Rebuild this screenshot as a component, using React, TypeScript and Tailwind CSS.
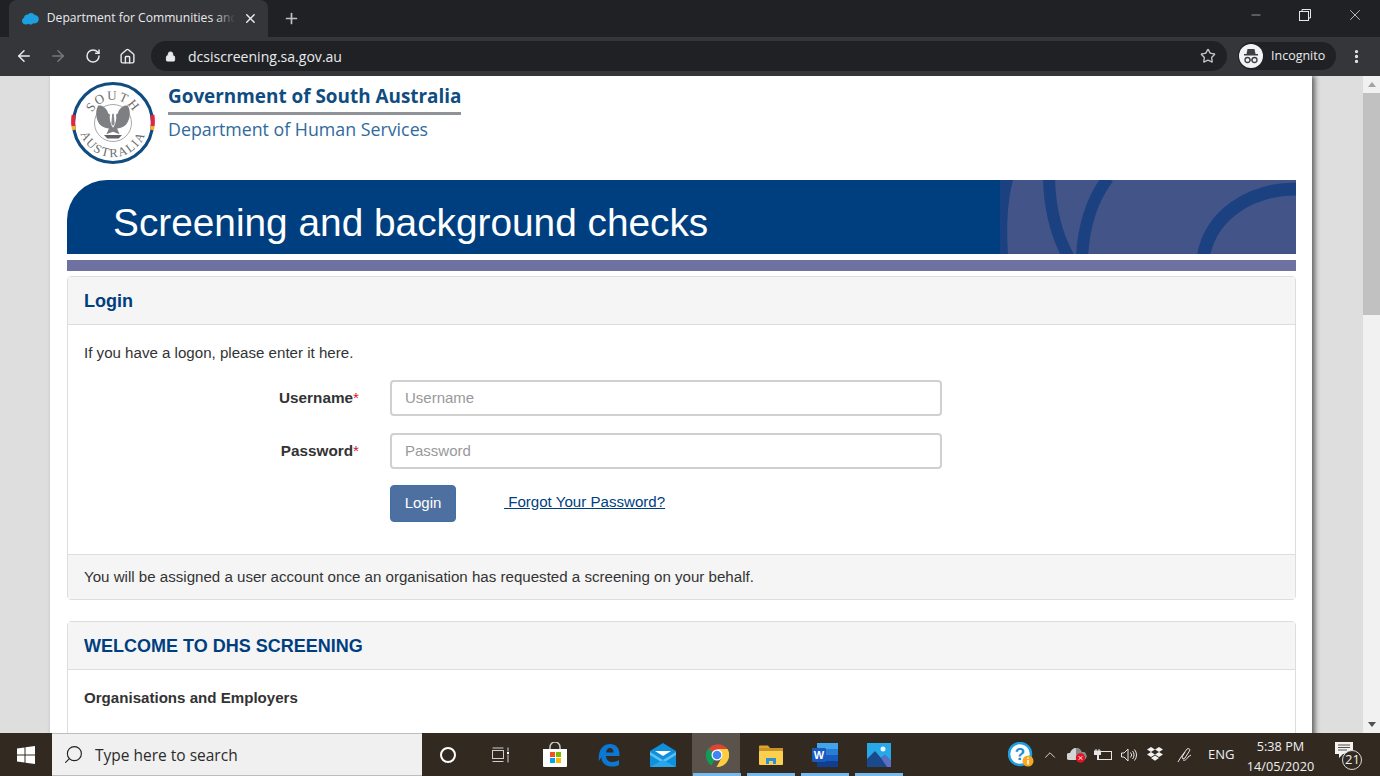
import { ArrowLeft, ArrowRight, RotateCw, Home, Lock, Star, X, Plus, Minus, MoreVertical, Search, ChevronUp } from 'lucide-react'

function SalesforceIcon() {
  return (
    <svg width="17" height="12" viewBox="0 0 17 12">
      <path d="M4 11.500C1.800 11.500 0 10 0 8c0-1.400.8-2.600 2-3.200C2.400 2.600 4 1.400 5.800 1.600 6.700.6 8 0 9.300 0c1.500 0 2.800.7 3.400 1.900C15.200 2 17 3.700 17 6c0 2.500-2 4.500-4.500 4.500-.5 0-.8 0-1.200-.1-.6.800-1.500 1.300-2.500 1.300-.8 0-1.600-.3-2.100-.8-.7.400-1.700.6-2.700.6z" fill="#1ca0e0" />
    </svg>
  )
}

function IncognitoAvatar() {
  return (
    <svg width="24" height="24" viewBox="0 0 24 24">
      <circle cx="12" cy="12" r="12" fill="#f1f3f4" />
      <path d="M8.500 5h7l1 5h-9z" fill="#3c4043" />
      <rect x="5" y="10" width="14" height="1.500" fill="#3c4043" />
      <circle cx="8.500" cy="16" r="2.500" fill="none" stroke="#3c4043" strokeWidth="1.300" />
      <circle cx="15.500" cy="16" r="2.500" fill="none" stroke="#3c4043" strokeWidth="1.300" />
      <path d="M11 16h2" stroke="#3c4043" strokeWidth="1.200" />
    </svg>
  )
}

function SaLogo() {
  return (
    <svg width="84" height="84" viewBox="0 0 84 84">
      <defs>
        <path id="topArc" d="M19 42a23 23 0 0 1 46 0" />
        <path id="bottomArc" d="M8 42a34 34 0 0 0 68 0" />
      </defs>
      <circle cx="42" cy="42" r="39.500" fill="#fff" stroke="#0f4c81" strokeWidth="3.200" />
      <path d="M2.600 34a40 40 0 0 0 -.2 11" fill="none" stroke="#e2243c" strokeWidth="4" />
      <path d="M81.400 34a40 40 0 0 1 .2 11" fill="none" stroke="#e2243c" strokeWidth="4" />
      <path d="M2.400 45a40 40 0 0 0 .6 4" fill="none" stroke="#f3b133" strokeWidth="4" />
      <path d="M81.600 45a40 40 0 0 1 -.6 4" fill="none" stroke="#f3b133" strokeWidth="4" />
      <circle cx="42" cy="42" r="18.500" fill="#fff" stroke="#a9a9a9" strokeWidth="1" />
      <text fontFamily="'Liberation Serif', serif" fontSize="13" fill="#6e6e6e" letterSpacing="1.500">
        <textPath href="#topArc" startOffset="50%" textAnchor="middle">SOUTH</textPath>
      </text>
      <text fontFamily="'Liberation Serif', serif" fontSize="12.500" fill="#6e6e6e" letterSpacing="1.600">
        <textPath href="#bottomArc" startOffset="50%" textAnchor="middle">AUSTRALIA</textPath>
      </text>
      <g transform="translate(42 41) scale(.82) translate(-42 -44)">
        <path d="M36 33c-2-7-8-10-12-9-5 8-2 21 4 25 3 2 6 3 9 3l-3 7 8-3 8 3-3-7c3 0 6-1 9-3 6-4 9-17 4-25-4-1-10 2-12 9-1 2-3 2-6 2s-5 0-6-2z" fill="#7d7f82" />
        <path d="M39 33c-2 5-1 12 3 18 4-6 5-13 3-18-2-2-4-2-6 0z" fill="#fff" />
        <path d="M41 34h2l1 12-2 3-2-3z" fill="#8a8c8f" />
        <path d="M31 60h22l-4 4H35z" fill="#5f6164" />
      </g>
    </svg>
  )
}

function BannerArt() {
  return (
    <svg className="absolute right-0 top-0" width="296" height="74" viewBox="0 0 296 74">
      <rect width="296" height="74" fill="#425488" />
      <path d="M0 0H13Q5 30 8 74H0Z" fill="#1b4180" />
      <path d="M49 -2Q50 44 69 78" fill="none" stroke="#1b4180" strokeWidth="12" />
      <path d="M108 -2Q84 30 82 78" fill="none" stroke="#1b4180" strokeWidth="12" />
      <path d="M203 78C210 35 250 9 296 9" fill="none" stroke="#1b4180" strokeWidth="13" />
    </svg>
  )
}

function StoreIcon() {
  return (
    <svg width="26" height="26" viewBox="0 0 26 26">
      <path d="M8 8V5a5 5 0 0 1 10 0v3" fill="none" stroke="#c9c9c9" strokeWidth="1.500" />
      <path d="M1 7h24v17a1 1 0 0 1-1 1H2a1 1 0 0 1-1-1z" fill="#fff" />
      <rect x="8" y="10" width="5" height="5" fill="#f25022" />
      <rect x="14" y="10" width="5" height="5" fill="#7fba00" />
      <rect x="8" y="16" width="5" height="5" fill="#00a4ef" />
      <rect x="14" y="16" width="5" height="5" fill="#ffb900" />
    </svg>
  )
}

function EdgeIcon() {
  return (
    <svg width="22" height="24" viewBox="0 0 22 24">
      <path d="M1 12C2 5 6 1 12 1c6 0 10 4 9.500 12H8c.2 4 3 6 6.500 6 2.500 0 5-.8 6.500-2v5c-2 1-4.500 1.500-7 1.500C7 23.500 3 19 3.500 14 3 15 2 16 1 18c-.3-2-.3-4 0-6zm7-2.500h7.500C15.500 6.500 14 5 11.800 5 10 5 8.500 7 8 9.500z" fill="#0a78d4" fillRule="evenodd" />
    </svg>
  )
}

function MailIcon() {
  return (
    <svg width="28" height="24" viewBox="0 0 28 24">
      <path d="M14 0L27 8v15a1 1 0 0 1-1 1H2a1 1 0 0 1-1-1V8z" fill="#0f8fdc" />
      <path d="M6 8h16l-8 5z" fill="#fff" />
      <path d="M1 9l13 8 13-8v3L14 20 1 12z" fill="#5ec1f3" />
      <path d="M14 17l13 7H1z" fill="#28a8ea" />
    </svg>
  )
}

function ChromeIcon() {
  return (
    <svg width="24" height="24" viewBox="0 0 24 24">
      <path d="M12 12L3 6.500A12 12 0 0 1 22.500 6H12z" fill="#db4437" />
      <path d="M12 12l-5.500 10.500A12 12 0 0 1 3 5.500z" fill="#0f9d58" />
      <path d="M12 6h10.500A12 12 0 0 1 11.500 24l5-9z" fill="#ffcd40" />
      <circle cx="12" cy="12" r="5.500" fill="#fff" />
      <circle cx="12" cy="12" r="4.300" fill="#4285f4" />
    </svg>
  )
}

function FolderIcon() {
  return (
    <svg width="24" height="20" viewBox="0 0 24 20">
      <path d="M0 1.500A1 1 0 0 1 1 .5h8l2 2.500H0z" fill="#e0a52c" />
      <rect y="3" width="24" height="4" fill="#c9922a" />
      <rect y="6" width="24" height="14" rx="1" fill="#fbd04f" />
      <path d="M7 19v-6h10v6h-3v-3h-4v3z" fill="#2f8fd6" />
    </svg>
  )
}

function WordIcon() {
  return (
    <svg width="26" height="24" viewBox="0 0 26 24">
      <rect x="5" width="21" height="6" fill="#41a5ee" />
      <rect x="5" y="6" width="21" height="6" fill="#2b7cd3" />
      <rect x="5" y="12" width="21" height="6" fill="#185abd" />
      <rect x="5" y="18" width="21" height="6" fill="#103f91" />
      <rect y="5" width="14" height="14" rx="1" fill="#185abd" />
      <text x="7" y="16" textAnchor="middle" fontFamily="'Liberation Sans', sans-serif" fontSize="11" fontWeight="700" fill="#fff">W</text>
    </svg>
  )
}

function PhotosIcon() {
  return (
    <svg width="24" height="24" viewBox="0 0 24 24">
      <rect width="24" height="24" fill="#27a9e8" />
      <circle cx="16" cy="6" r="2.500" fill="#e8f5fc" />
      <path d="M0 16l8-8 6 7 4-3 6 6v6H0z" fill="#1a4a8c" />
      <path d="M14 15l4-3 6 6v6h-4z" fill="#5b6fc4" />
    </svg>
  )
}

function HelpIcon() {
  return (
    <svg width="26" height="26" viewBox="0 0 26 26">
      <circle cx="12" cy="12" r="11" fill="#fff" stroke="#1ba1e2" strokeWidth="2.500" />
      <text x="12" y="18" textAnchor="middle" fontFamily="'Liberation Sans', sans-serif" fontSize="17" fontWeight="700" fill="#1b8fd6">?</text>
      <circle cx="20" cy="19" r="5.500" fill="#f6a821" />
      <rect x="19.300" y="18" width="1.500" height="4.500" fill="#fff" />
      <rect x="19.300" y="15.500" width="1.500" height="1.500" fill="#fff" />
    </svg>
  )
}

function CloudErrorIcon() {
  return (
    <svg width="20" height="16" viewBox="0 0 20 16">
      <path d="M2 13a3.500 3.500 0 0 1 1-7c1-3 3-5 6-5s5 2 5.500 4A4 4 0 0 1 16 13z" fill="#d5d5d5" />
      <path d="M9 1c3 0 5 2 5.500 4A4 4 0 0 1 16 13H9z" fill="#888" />
      <circle cx="13.500" cy="11" r="4.700" fill="#e81123" />
      <path d="M11.700 9.200l3.600 3.600M15.300 9.200l-3.600 3.600" stroke="#fff" strokeWidth="1" />
    </svg>
  )
}

function BatteryIcon() {
  return (
    <svg width="18" height="14" viewBox="0 0 18 14" fill="none" stroke="#e6e6e6">
      <rect x="4.500" y="3.500" width="13" height="8" />
      <path d="M2 1v2M5 1v2" />
      <rect x=".5" y="3" width="6" height="3.500" fill="#e6e6e6" />
      <path d="M3.500 7v5" />
    </svg>
  )
}

function SpeakerIcon() {
  return (
    <svg width="17" height="14" viewBox="0 0 17 14" fill="none" stroke="#e6e6e6">
      <path d="M.5 5h2.500L7 1v12L3 9H.5z" />
      <path d="M9.500 4.500a3.500 3.500 0 0 1 0 5M11.500 3a6 6 0 0 1 0 8M13.500 1.500a8.500 8.500 0 0 1 0 11" />
    </svg>
  )
}

function DropboxIcon() {
  return (
    <svg width="16" height="15" viewBox="0 0 16 15" fill="#f2f2f2">
      <path d="M4 0l4 2.500L4 5 0 2.500zM12 0l4 2.500L12 5 8 2.500zM4 5l4 2.500L4 10 0 7.500zM12 5l4 2.500L12 10 8 7.500zM4 11l4-2.500 4 2.500-4 2.800z" />
    </svg>
  )
}

function PenIcon() {
  return (
    <svg width="16" height="16" viewBox="0 0 16 16" fill="none" stroke="#e6e6e6">
      <path d="M1 15l3-5 6-8c1-1 3 0 3 1l-5 8-2 1-1-2 3-5M6 13c2 1 4-1 5-3l3-2" />
    </svg>
  )
}

function NotificationIcon() {
  return (
    <svg width="20" height="18" viewBox="0 0 20 18">
      <path d="M0 0h18v12H8l-4 4v-4H0z" fill="#f2f2f2" />
      <path d="M3 3h12M3 5.500h12M3 8h9" stroke="#554f46" strokeWidth="1" />
    </svg>
  )
}

function TaskViewIcon() {
  return (
    <svg width="18" height="16" viewBox="0 0 18 16" fill="none" stroke="#cfcfcf">
      <rect x=".5" y="3.500" width="11" height="8" />
      <path d="M.5 1h11M.5 14.500h11M16 .5v4M16 7.500v8" />
      <rect x="15" y="5" width="2" height="2" fill="#fff" stroke="none" />
    </svg>
  )
}

function TaskbarApp({ children, active, running }: { children: React.ReactNode; active?: boolean; running?: boolean }) {
  return (
    <div className="relative flex h-full w-[54px] shrink-0 items-center justify-center">
      {active && <div className="absolute inset-y-0 left-[2px] right-[4px] bg-[#5a534c]" />}
      <div className="relative flex">{children}</div>
      {running && <div className="absolute bottom-0 left-[3px] right-[3px] h-[3px] bg-[#76b9ed]" />}
    </div>
  )
}

function Field({ label, placeholder }: { label: string; placeholder: string }) {
  return (
    <div className="flex h-9 items-center">
      <label className="w-[276px] pr-[1px] text-right text-[15.300px] font-bold text-[#333]">
        {label}<span className="font-normal text-[#e0102a]">*</span>
      </label>
      <input
        placeholder={placeholder}
        className="ml-[30px] h-9 w-[552px] rounded border-2 border-[#d0d0d0] bg-white px-[13px] pb-[2px] text-[15px] text-[#333] placeholder:text-[#999]"
      />
    </div>
  )
}

export default function App() {
  return (
    <div className="flex h-[776px] w-[1380px] flex-col overflow-hidden bg-[#dedede] font-['Liberation_Sans',sans-serif]">
      {/* tab strip */}
      <div className="flex h-[37px] shrink-0 items-end bg-[#202124] pl-[9px] font-['Open_Sans',sans-serif]">
        <div className="flex h-[37px] w-[259px] items-center rounded-t-lg bg-[#35363a] pl-[13px] pr-[10px]">
          <SalesforceIcon />
          <div className="relative ml-[8px] w-[190px] overflow-hidden whitespace-nowrap text-[12.100px] text-[#e8eaed]">
            Department for Communities and
            <div className="absolute right-0 top-0 h-full w-5 bg-gradient-to-r from-transparent to-[#35363a]" />
          </div>
          <X size={15} strokeWidth={2.4} className="ml-[8px] text-[#e8eaed]" />
        </div>
        <Plus size={17} strokeWidth={2.4} className="mb-[10px] ml-[15px] text-[#bdc1c6]" />
        <div className="mb-[13px] ml-auto flex items-center pr-[16px] text-[#e8e8e8]">
          <Minus size={14} strokeWidth={1} />
          <svg className="ml-[36px]" width="12" height="12" viewBox="0 0 12 12" fill="none" stroke="#e8e8e8">
            <rect x=".5" y="2.500" width="9" height="9" />
            <path d="M3 2.500V.5h8.500V9H9.500" />
          </svg>
          <X size={18} strokeWidth={1} className="ml-[35px]" />
        </div>
      </div>

      {/* toolbar */}
      <div className="flex h-[39px] shrink-0 items-center bg-[#35363a] pb-[1px] font-['Open_Sans',sans-serif]">
        <ArrowLeft size={18} className="ml-[15px] text-[#e8eaed]" />
        <ArrowRight size={18} className="ml-[16px] text-[#75787c]" />
        <RotateCw size={16} strokeWidth={2.2} className="ml-[18px] text-[#e8eaed]" />
        <Home size={17} strokeWidth={2} className="ml-[18px] text-[#e8eaed]" />
        <div className="ml-[15px] flex h-[30px] w-[1076px] items-center rounded-full bg-[#202124] pl-[14px] pr-[11px]">
          <Lock size={11} fill="#e8eaed" className="text-[#e8eaed]" />
          <span className="ml-[12px] pt-[1px] text-[14.050px] text-[#e8eaed]">dcsiscreening.sa.gov.au</span>
          <Star size={16} className="ml-auto text-[#c4c7ca]" />
        </div>
        <div className="ml-[11px] flex h-[28px] w-[98px] items-center rounded-full bg-[#202124] pl-[1px]">
          <IncognitoAvatar />
          <span className="ml-[8px] text-[12.500px] text-[#e8eaed]">Incognito</span>
        </div>
        <MoreVertical size={17} strokeWidth={2.6} className="ml-[12px] text-[#e8eaed]" />
      </div>

      {/* browser viewport */}
      <div className="flex min-h-0 flex-1">
        <div className="flex flex-1 overflow-hidden pl-[50px]">
          <div className="h-[700px] w-[1262px] shrink-0 bg-white pl-[17px] pr-[16px] shadow-[3px_0_5px_rgba(0,0,0,0.55)]">
            <div className="flex h-[104px] items-start pl-[4px] pt-[5px]">
              <SaLogo />
              <div className="ml-[13px] w-[293px] pt-[2px] font-['Open_Sans',sans-serif]">
                <div className="whitespace-nowrap text-[18.900px] font-bold leading-[27px] text-[#0f4c81]">Government of South Australia</div>
                <div className="mt-[2px] h-[3px] bg-[#8f9296]" />
                <div className="whitespace-nowrap text-[17.800px] leading-[28px] text-[#2f6a9c]">Department of Human Services</div>
              </div>
            </div>

            <div className="relative h-[74px] overflow-hidden rounded-tl-[40px] bg-[#003f7f] pl-[46px]">
              <BannerArt />
              <h1 className="relative text-[38.800px] leading-[85px] text-white">Screening and background checks</h1>
            </div>
            <div className="mt-[6px] h-[11px] bg-[#6f72a0]" />

            <section className="mt-[5px] flex h-[324px] flex-col rounded border border-[#ddd]">
              <div className="flex h-[48px] shrink-0 items-center border-b border-[#ddd] bg-[#f5f5f5] px-4 pt-[1px]">
                <h2 className="text-[18px] font-bold text-[#003f7f]">Login</h2>
              </div>
              <div className="flex-1 px-4 pt-[19px]">
                <p className="text-[15.100px] leading-[17px] text-[#333]">If you have a logon, please enter it here.</p>
                <div className="mt-[19px] flex flex-col gap-[17px]">
                  <Field label="Username" placeholder="Username" />
                  <Field label="Password" placeholder="Password" />
                </div>
                <div className="mt-[16px] flex items-center pl-[306px]">
                  <button className="h-[37px] w-[66px] rounded border border-[#3d72a8] bg-[#4e70a1] text-[15px] text-white">Login</button>
                  <a className="mb-[3px] ml-[48px] whitespace-pre text-[15.100px] text-[#003f7f] underline"> Forgot Your Password?</a>
                </div>
              </div>
              <div className="flex h-[45px] shrink-0 items-center border-t border-[#ddd] bg-[#f5f5f5] px-4 pt-[1px] text-[15.100px] text-[#333]">
                You will be assigned a user account once an organisation has requested a screening on your behalf.
              </div>
            </section>

            <section className="mt-[21px] h-[200px] rounded-t border border-[#ddd]">
              <div className="flex h-[48px] items-center border-b border-[#ddd] bg-[#f5f5f5] px-4 pt-[1px]">
                <h2 className="text-[18px] font-bold text-[#003f7f]">WELCOME TO DHS SCREENING</h2>
              </div>
              <div className="px-4 pt-[17px] text-[15.100px] font-bold text-[#333]">Organisations and Employers</div>
            </section>
          </div>
        </div>

        {/* scrollbar */}
        <div className="flex w-[17px] shrink-0 flex-col bg-[#f1f1f1]">
          <div className="flex h-[17px] items-center justify-center">
            <div className="h-0 w-0 border-x-[4px] border-b-[5px] border-x-transparent border-b-[#a3a3a3]" />
          </div>
          <div className="h-[222px] bg-[#c1c1c1]" />
          <div className="flex-1" />
          <div className="flex h-[17px] items-center justify-center">
            <div className="h-0 w-0 border-x-[4px] border-t-[5px] border-x-transparent border-t-[#505050]" />
          </div>
        </div>
      </div>

      {/* taskbar */}
      <div className="flex h-[43px] shrink-0 items-center bg-[#322a20] font-['Open_Sans',sans-serif] text-[#f0f0f0]">
        <div className="flex h-full w-[52px] shrink-0 items-center justify-center">
          <svg width="18" height="18" viewBox="0 0 18 18" fill="#fff">
            <path d="M0 2.500L7.500 1.500V8.500H0zM8.500 1.300L18 0V8.500H8.500zM0 9.500H7.500V16.500L0 15.500zM8.500 9.500H18V18L8.500 16.700z" />
          </svg>
        </div>
        <div className="flex h-full w-[370px] shrink-0 items-center border-y border-[#bdbdbd] bg-[#f0f0f0] pl-[11px]">
          <Search size={21} strokeWidth={1.3} className="-scale-x-100 text-[#222]" />
          <span className="ml-[11px] pt-[2px] text-[15.500px] text-[#2b2b2b]">Type here to search</span>
        </div>
        <div className="flex h-full w-[52px] shrink-0 items-center justify-center">
          <div className="h-[16px] w-[16px] rounded-full border-2 border-white" />
        </div>
        <div className="flex h-full w-[54px] shrink-0 items-center justify-center"><TaskViewIcon /></div>
        <TaskbarApp><StoreIcon /></TaskbarApp>
        <TaskbarApp><EdgeIcon /></TaskbarApp>
        <TaskbarApp><MailIcon /></TaskbarApp>
        <TaskbarApp active running><ChromeIcon /></TaskbarApp>
        <TaskbarApp running><FolderIcon /></TaskbarApp>
        <TaskbarApp running><WordIcon /></TaskbarApp>
        <TaskbarApp running><PhotosIcon /></TaskbarApp>

        <div className="ml-[102px] flex h-full items-center">
          <HelpIcon />
          <ChevronUp size={18} strokeWidth={1.2} className="ml-[7px] text-[#e6e6e6]" />
          <div className="ml-[8px]"><CloudErrorIcon /></div>
          <div className="ml-[7px]"><BatteryIcon /></div>
          <div className="ml-[9px]"><SpeakerIcon /></div>
          <div className="ml-[9px]"><DropboxIcon /></div>
          <div className="ml-[14px]"><PenIcon /></div>
          <span className="ml-[15px] text-[13px]">ENG</span>
          <div className="ml-[9px] w-[74px] pt-[2px] text-center text-[12.700px] leading-[20px]">
            <div>5:38 PM</div>
            <div>14/05/2020</div>
          </div>
          <div className="relative ml-[18px] h-[30px] w-[30px]">
            <div className="pt-[2px]"><NotificationIcon /></div>
            <div className="absolute bottom-0 left-[7px] flex h-[20px] w-[20px] items-center justify-center rounded-full border border-[#ddd] bg-[#322a20] text-[13px]">21</div>
          </div>
        </div>
      </div>
    </div>
  )
}
